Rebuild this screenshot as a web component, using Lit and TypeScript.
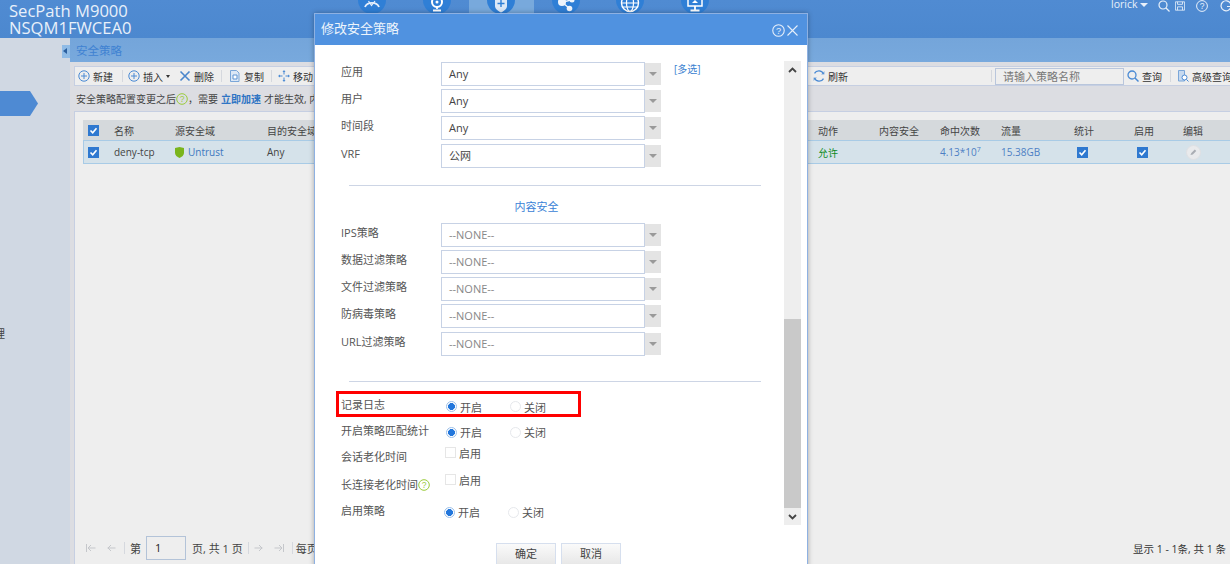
import { LitElement, html, css, svg } from "lit";
import { customElement } from "lit/decorators.js";

const plus = html`<svg class="ti" viewBox="0 0 12 12"><circle cx="6" cy="6" r="5.200" fill="none" stroke="#4a8ad4" stroke-width="1"/><path d="M6 3v6M3 6h6" stroke="#4a8ad4" stroke-width="1"/></svg>`;
const cross = html`<svg class="ti" viewBox="0 0 12 12"><path d="M1.500 1.500l9 9M10.500 1.500l-9 9" stroke="#4a86cc" stroke-width="1.600"/></svg>`;
const copy = html`<svg class="ti" viewBox="0 0 12 12"><path d="M1.500 .5h6l2.500 2.500v8.500h-8.500z" fill="#dbe7f5" stroke="#7aa6d8"/><path d="M4 5h4v4h-4z" fill="#fff" stroke="#5c93d2"/></svg>`;
const move = html`<svg class="ti" viewBox="0 0 12 12"><path d="M6 0l1.500 2h-3zM6 12l1.500-2h-3zM0 6l2-1.500v3zM12 6l-2-1.500v3z" fill="#4a8ad4"/><path d="M6 2v2.500M6 7.500v2.500M2 6h2.500M7.500 6h2.500" stroke="#4a8ad4"/></svg>`;
const refresh = html`<svg class="ti" viewBox="0 0 12 12"><path d="M10.500 4a5 5 0 0 0-9-.6" fill="none" stroke="#4a8ad4" stroke-width="1.300"/><path d="M1.500 8a5 5 0 0 0 9 .6" fill="none" stroke="#4a8ad4" stroke-width="1.300"/><path d="M11.500 1v3.500h-3.500zM.5 11v-3.500h3.500z" fill="#4a8ad4" opacity=".6"/></svg>`;
const search = html`<svg class="ti" viewBox="0 0 12 12"><circle cx="5" cy="5" r="4" fill="none" stroke="#4a8ad4" stroke-width="1.300"/><path d="M8 8l3.500 3.500" stroke="#4a8ad4" stroke-width="1.500"/></svg>`;
const adv = html`<svg class="ti" viewBox="0 0 12 12"><path d="M1.500 .5h6v10.500h-6z" fill="#c6d9ef" stroke="#7aa6d8"/><circle cx="7.500" cy="7.500" r="2.500" fill="#fff" stroke="#4a8ad4"/><path d="M9.500 9.500l2 2" stroke="#4a8ad4"/></svg>`;
const help = (c: string) => html`<svg class="help" viewBox="0 0 12 12"><circle cx="6" cy="6" r="5.300" fill="none" stroke="${c}"/><text x="6" y="9" text-anchor="middle" font-size="8.500" font-family="Liberation Sans" fill="${c}">?</text></svg>`;
const checkMark = html`<svg class="cb" viewBox="0 0 11 11"><rect width="11" height="11" fill="#2f79d0"/><path d="M2.500 5.500l2.200 2.300 3.800-4.600" fill="none" stroke="#fff" stroke-width="1.600"/></svg>`;

const tabIcons = [
  svg`<path d="M7 7c2-5.500 12-5.500 14 0" fill="none" stroke="#e6effa" stroke-width="1.800"/><path d="M10.500 1l3 4.500 3.500-4.500" fill="none" stroke="#e6effa" stroke-width="1.200"/>`,
  svg`<circle cx="14" cy="2" r="5" fill="none" stroke="#fff" stroke-width="2"/><circle cx="14" cy="2" r="1.500" fill="#fff"/><path d="M14 7v2M10 10.500h8" stroke="#fff" stroke-width="1.800"/>`,
  svg`<path d="M8 -1h12v7c0 3-3 5-6 6.500c-3-1.500-6-3.500-6-6.500z" fill="#dbe8f7"/><path d="M14 0v7M10.500 3.500h7" stroke="#2f7fd6" stroke-width="1.400"/>`,
  svg`<circle cx="10" cy="2" r="4" fill="#eef4fb"/><circle cx="17.500" cy="8.500" r="2.800" fill="#eef4fb"/><circle cx="20" cy="0" r="2.500" fill="#eef4fb"/><path d="M11 3l6 5M11 2l8-2" stroke="#eef4fb" stroke-width="1.300"/>`,
  svg`<circle cx="14" cy="3" r="8.500" fill="none" stroke="#fff" stroke-width="1.400"/><ellipse cx="14" cy="3" rx="3.500" ry="8.500" fill="none" stroke="#fff" stroke-width="1.200"/><path d="M6 3h16M7 7h14" stroke="#fff" stroke-width="1.200"/>`,
  svg`<path d="M7 -1h14v7h-14z" fill="none" stroke="#fff" stroke-width="1.500"/><path d="M11 3l3 -3 3 3z" fill="#fff"/><path d="M14 6v4M9.500 10.500h9" stroke="#fff" stroke-width="1.800"/>`,
];

@customElement("app-root")
export class AppRoot extends LitElement {
  static styles = css`
    :host { display: block; width: 1230px; height: 564px; overflow: hidden; position: relative; background: #eee;
      font-family: "Open Sans", "Noto Sans CJK SC", sans-serif; font-size: 11px; color: #444; }
    * { box-sizing: border-box; }
    .header { height: 38px; display: flex; background: linear-gradient(#508bd2, #4c88cf); color: #e8f0fa; }
    .logo { width: 341px; padding: 2px 0 0 9px; font-size: 16.600px; line-height: 17px; font-family: "Open Sans", sans-serif; }
    .tabs { display: flex; width: 392px; margin-left: -1px; }
    .tab { width: 64.500px; display: flex; justify-content: center; align-items: flex-start; }
    .tab.on { background: #78a9dc; }
    .tab svg { width: 28px; height: 14px; display: block; }
    .user { margin-left: auto; display: flex; align-items: flex-start; padding-top: 0; margin-right: -2px; height: 12px; }
    .user span { font-size: 10.500px; line-height: 9px; width: 29px; }
    .caret { width: 0; height: 0; border: 4px solid transparent; border-top: 4px solid #e8f0fa; border-bottom: 0; margin: 3px 10px 0 0; }
    .user svg { display: block; }
    .uicon { width: 12px; height: 12px; margin-right: 5px; }
    .body { display: flex; height: 526px; }
    .side { width: 70px; background: #d0d8e3; position: relative; flex: none; display: flex; flex-direction: column; }
    .toggle { position: absolute; top: 7px; right: 0; width: 8px; height: 13px; background: #8fbbe6; }
    .toggle::after { content: ""; position: absolute; left: 1px; top: 3px; border: 3px solid transparent; border-right: 4px solid #2a5f9f; border-left: 0; }
    .active { margin-top: 53px; width: 38px; height: 25px; background: #4e8ad3; clip-path: polygon(0 0, 30px 0, 38px 50%, 30px 100%, 0 100%); flex: none; }
    .li { margin-top: 209px; font-size: 11px; color: #444; margin-left: -6px; }
    .main { flex: 1; background: #dcdde2; display: flex; flex-direction: column; min-width: 0; }
    .crumb { height: 24px; background: linear-gradient(#74a5da, #78a9dd); color: #3f82d2; font-size: 11.500px; line-height: 25px; padding-left: 6px; flex: none; }
    .toolbar { margin: 4px 0 0 4px; height: 20px; background: #eee; border-top: 1px solid #c6cfe2; border-bottom: 1px solid #c6cfe2; border-left: 1px solid #c6cfe2; display: flex; align-items: center; padding-left: 3px; flex: none; color: #333; white-space: nowrap; font-size: 10px; }
    .ti { width: 12px; height: 12px; display: block; flex: none; margin-right: 3px; }
    .sep { width: 1px; height: 12px; background: #d5d8de; flex: none; }
    .dn { width: 0; height: 0; border: 2.500px solid transparent; border-top: 3px solid #333; border-bottom: 0; margin: 1px 0 0 3px; }
    .tb { display: flex; align-items: center; flex: none; }
    .search { width: 129px; height: 17px; border: 1px solid #b9c6dc; padding-left: 7px; line-height: 15px; color: #777; font-size: 11px; background: #eee; flex: none; margin: 0 3px 0 3px; }
    .notice { height: 25px; line-height: 24px; padding-left: 6px; flex: none; color: #444; white-space: nowrap; display: flex; align-items: center; font-size: 10px; }
    .notice b { color: #2f75c4; font-weight: 600; margin: 0 3px; }
    .help { width: 12px; height: 12px; flex: none; display: block; }
    .panel { flex: 1; margin-left: 4px; background: #eee; border-top: 1px solid #c6cfe2; border-left: 1px solid #c6cfe2; padding: 8px 0 0 8px; display: flex; flex-direction: column; min-height: 0; }
    .row { display: grid; grid-template-columns: 26px 61px 92px 551px 61px 61px 61px 73px 60px 49px 1fr; align-items: center; flex: none; font-size: 10px; }
    .th { height: 20px; background: #d5d9dc; color: #444; padding-left: 5px; }
    .tr { height: 24px; background: #d5e2ea; border-top: 1px solid #a8cbe6; border-bottom: 1px solid #a8cbe6; border-left: 1px solid #a8cbe6; padding-left: 4px; }
    .cb { width: 11px; height: 11px; display: block; }
    .blue { color: #4d7fc4; }
    .zone { display: flex; align-items: center; gap: 4px; color: #3d78c0; }
    .green { color: #0f8a1d; }
    sup { font-size: 7px; line-height: 0; }
    .edit { width: 15px; height: 15px; border-radius: 50%; background: #e9eaec; border: 1px solid #dfe0e3; display: block; margin-left: 3px; }
    .ctr { display: block; margin-left: 3px; }
    .pager { margin-top: auto; height: 24px; margin-bottom: 4px; display: flex; align-items: center; margin-left: 3px; white-space: nowrap; color: #444; }
    .pg { width: 10px; height: 10px; flex: none; display: block; }
    .pinput { width: 40px; height: 24px; border: 1px solid #b3c3d8; padding-left: 8px; line-height: 22px; color: #222; margin: 0 6px 0 5px; flex: none; }
    .pright { margin-left: auto; margin-right: 4px; color: #333; font-size: 10.500px; }

    .modal { position: absolute; left: 314px; top: 13px; width: 494px; height: 570px; background: #fff; border: 1px solid #8eb1e2; box-shadow: 0 0 5px rgba(0,0,0,.3); display: flex; flex-direction: column; }
    .mhead { height: 31px; background: #5092e0; color: #eef5fc; font-size: 13px; line-height: 28px; padding: 0 9px 0 6px; display: flex; align-items: flex-start; flex: none; }
    .mhead .icons { margin-left: auto; display: flex; align-items: center; gap: 2px; margin-top: 10px; }
    .mhead .help { width: 13px; height: 13px; }
    .x { width: 11px; height: 11px; display: block; }
    .mbody { display: flex; height: 491px; flex: none; }
    .form { width: 469px; padding: 17px 0 0 26px; flex: none; }
    .fr { display: flex; height: 24px; margin-bottom: 3px; }
    .fr.x4 { margin-bottom: 4px; }
    .fl { width: 100px; line-height: 20px; height: 20px; color: #555; flex: none; white-space: nowrap; }
    .select { width: 204px; height: 24px; border: 1px solid #c7d2e5; padding-left: 7px; line-height: 21px; color: #444; flex: none; }
    .none { color: #888; }
    .arrow { width: 16px; height: 22px; margin-top: 1px; background: #e4e4e4; position: relative; flex: none; }
    .arrow::after { content: ""; position: absolute; left: 4px; top: 9px; border: 4px solid transparent; border-top: 4px solid #9a9a9a; border-bottom: 0; }
    .multi { color: #3a7fd0; margin-left: 13px; line-height: 14px; font-size: 10px; }
    .div { height: 1px; background: #cdd5e5; margin-left: 8px; width: 412px; }
    .d1 { margin-top: 17px; }
    .d2 { margin-top: 25px; }
    .sect { height: 20px; line-height: 20px; text-align: center; color: #3a82d6; width: 391px; margin: 11px 0 6px 0; padding-left: 0; }
    .opt { display: grid; grid-template-columns: 105px 64px 60px; height: 20px; align-items: center; }
    .opt .ol { color: #555; line-height: 20px; white-space: nowrap; display: flex; align-items: center; }
    .opt .ol.lo { padding-top: 1px; }
    .hl { border: 3px solid #f00; width: 245px; height: 26px; margin: 9px 0 0 -5px; padding-left: 2px; grid-template-columns: 105px 64px 60px; }
    .choice { display: flex; align-items: center; color: #555; gap: 3px; white-space: nowrap; }
    .radio { width: 11px; height: 11px; border-radius: 50%; border: 1px solid #e6e8ec; background: #fff; flex: none; }
    .radio.on { border-color: #9cc0ea; background: radial-gradient(circle, #2377dc 0 3.200px, #fff 3.700px); }
    .box { width: 11px; height: 11px; border: 1px solid #e6e6e6; flex: none; margin-left: -1px; background: #fff; }
    .mt4 { margin-top: 4px; } .mt5 { margin-top: 5px; } .mt8 { margin-top: 8px; } .mt7 { margin-top: 7px; }
    .pt4 { padding-top: 4px; } .pt2 { padding-top: 2px; } .up3 { margin-top: -8px; } .up4 { margin-top: -10px; } .pt1 { padding-top: 2px; margin-left: -2px; }
    .scroll { width: 17px; height: 464px; margin-top: 16px; background: #eee; display: flex; flex-direction: column; flex: none; }
    .sb { height: 17px; display: flex; align-items: center; justify-content: center; flex: none; }
    .sb svg { width: 9px; height: 6px; display: block; }
    .thumb { height: 189px; background: #c9c9c9; margin-top: auto; flex: none; }
    .mfoot { display: flex; justify-content: center; gap: 5px; padding-top: 7px; padding-right: 5px; }
    .btn { width: 60px; height: 24px; border: 1px solid #d6dfee; background: linear-gradient(#fafafa, #e6e6e6); text-align: center; line-height: 20px; color: #444; }
  `;

  private tbItem(icon: unknown, label: string, gap = 0) {
    return html`<div class="tb" style="margin-left:${gap}px">${icon}<span>${label}</span></div>`;
  }

  private field(label: string, value: string, none = false, tall = false, multi = false) {
    return html`<div class="fr ${tall ? "x4" : ""}"><div class="fl">${label}</div>
      <div class="select ${none ? "none" : ""}">${value}</div><div class="arrow"></div>
      ${multi ? html`<div class="multi">[多选]</div>` : ""}</div>`;
  }

  private choices(cls: string) {
    return html`<div class="choice ${cls}"><span class="radio on"></span>开启</div>
      <div class="choice ${cls}"><span class="radio"></span>关闭</div>`;
  }

  render() {
    return html`
      <div class="header">
        <div class="logo">SecPath M9000<br />NSQM1FWCEA0</div>
        <div class="tabs">
          ${tabIcons.map((ic, i) => html`<div class="tab ${i === 2 ? "on" : ""}"><svg viewBox="0 0 28 14"><circle cx="14" cy="0" r="14" fill="#2f7fd6"/>${ic}</svg></div>`)}
        </div>
        <div class="user">
          <span>lorick</span><div class="caret"></div>
          <svg class="uicon" viewBox="0 0 12 12"><circle cx="5" cy="5" r="4" fill="none" stroke="#e8f0fa" stroke-width="1.200"/><path d="M8 8l3.500 3.500" stroke="#e8f0fa" stroke-width="1.300"/></svg>
          <svg class="uicon" viewBox="0 0 12 12" style="width:10px;margin-right:11px"><path d="M.5 1h11v10h-11z" fill="none" stroke="#e8f0fa"/><path d="M3 1v3h6v-3M3 11v-4h6v4" fill="none" stroke="#e8f0fa"/></svg>
          <svg class="uicon" viewBox="0 0 12 12" style="margin-right:12px"><circle cx="6" cy="6" r="5.400" fill="none" stroke="#e8f0fa"/><text x="6" y="9" text-anchor="middle" font-size="8.500" font-family="Liberation Sans" fill="#e8f0fa">?</text></svg>
          <svg class="uicon" viewBox="0 0 12 12" style="margin-right:0"><path d="M10.500 3.500a5 5 0 1 0 .5 3h-4" fill="none" stroke="#e8f0fa" stroke-width="1.200"/></svg>
        </div>
      </div>
      <div class="body">
        <div class="side"><div class="toggle"></div><div class="active"></div><div class="li">理</div></div>
        <div class="main">
          <div class="crumb">安全策略</div>
          <div class="toolbar">
            ${this.tbItem(plus, "新建")}
            <div class="sep" style="margin-left:9px"></div>
            ${this.tbItem(plus, "插入", 5)}<div class="dn"></div>
            ${this.tbItem(cross, "删除", 9)}
            <div class="sep" style="margin-left:7px"></div>
            ${this.tbItem(copy, "复制", 7)}
            <div class="sep" style="margin-left:7px"></div>
            ${this.tbItem(move, "移动", 6)}
            ${this.tbItem(refresh, "刷新", 500)}
            <div class="sep" style="margin-left:143px"></div>
            <div class="search">请输入策略名称</div>
            ${this.tbItem(search, "查询")}
            <div class="sep" style="margin-left:8px"></div>
            ${this.tbItem(adv, "高级查询", 6)}
          </div>
          <div class="notice">安全策略配置变更之后${help("#9bcb3c")}，需要<b>立即加速</b>才能生效, 内容安全策略</div>
          <div class="panel">
            <div class="row th">
              ${checkMark}<span>名称</span><span>源安全域</span><span>目的安全域</span><span>动作</span><span>内容安全</span><span>命中次数</span><span>流量</span><span>统计</span><span>启用</span><span>编辑</span>
            </div>
            <div class="row tr">
              ${checkMark}<span>deny-tcp</span>
              <span class="zone"><svg width="9" height="11" viewBox="0 0 9 11"><path d="M0 1l4.500-1 4.500 1v5c0 2-2 4-4.500 5c-2.500-1-4.500-3-4.500-5z" fill="#7ab51d"/></svg>Untrust</span>
              <span>Any</span><span class="green">允许</span><span></span>
              <span class="blue">4.13*10<sup>7</sup></span><span class="blue">15.38GB</span>
              <span class="ctr">${checkMark}</span><span class="ctr">${checkMark}</span>
              <svg class="edit" viewBox="0 0 15 15"><path d="M4 10.500l1-2.500 4-4 1.700 1.700-4 4z" fill="#a9adb3"/></svg>
            </div>
            <div class="pager">
              <svg class="pg" viewBox="0 0 10 10"><path d="M.5 1v8M9.500 5h-7M5 2l-3 3 3 3" fill="none" stroke="#c5c7cb"/></svg>
              <svg class="pg" style="margin-left:10px" viewBox="0 0 10 10"><path d="M9.500 5h-8M5 2l-3 3 3 3" fill="none" stroke="#c5c7cb"/></svg>
              <div class="sep" style="margin:0 5px 0 8px"></div>第<div class="pinput">1</div>页, 共 1 页
              <div class="sep" style="margin:0 5px"></div>
              <svg class="pg" viewBox="0 0 10 10"><path d="M.5 5h8M5 2l3 3-3 3" fill="none" stroke="#c5c7cb"/></svg>
              <svg class="pg" style="margin-left:10px" viewBox="0 0 10 10"><path d="M9.500 1v8M.5 5h7M5 2l3 3-3 3" fill="none" stroke="#c5c7cb"/></svg>
              <div class="sep" style="margin:0 3px 0 8px"></div>每页显示
              <div class="pright">显示 1 - 1条, 共 1 条</div>
            </div>
          </div>
        </div>
      </div>

      <div class="modal">
        <div class="mhead">修改安全策略
          <div class="icons">${help("#e6effa")}
            <svg class="x" viewBox="0 0 11 11"><path d="M.5.5l10 10M10.500.5l-10 10" stroke="#e6effa" stroke-width="1.100"/></svg>
          </div>
        </div>
        <div class="mbody">
          <div class="form">
            ${this.field("应用", "Any", false, false, true)}
            ${this.field("用户", "Any")}
            ${this.field("时间段", "Any", false, true)}
            ${this.field("VRF", "公网")}
            <div class="div d1"></div>
            <div class="sect">内容安全</div>
            ${this.field("IPS策略", "--NONE--", true)}
            ${this.field("数据过滤策略", "--NONE--", true)}
            ${this.field("文件过滤策略", "--NONE--", true)}
            ${this.field("防病毒策略", "--NONE--", true, true)}
            ${this.field("URL过滤策略", "--NONE--", true)}
            <div class="div d2"></div>
            <div class="opt hl"><div class="ol lo">记录日志</div>${this.choices("pt4")}</div>
            <div class="opt mt4"><div class="ol">开启策略匹配统计</div>${this.choices("pt2")}</div>
            <div class="opt mt5"><div class="ol lo">会话老化时间</div><div class="choice up3"><span class="box"></span>启用</div></div>
            <div class="opt mt8"><div class="ol lo">长连接老化时间${help("#9bcb3c")}</div><div class="choice up4"><span class="box"></span>启用</div></div>
            <div class="opt mt7"><div class="ol">启用策略</div>${this.choices("pt1")}</div>
          </div>
          <div class="scroll">
            <div class="sb"><svg viewBox="0 0 9 6"><path d="M1 5l3.500-3.500 3.500 3.500" fill="none" stroke="#444" stroke-width="1.800"/></svg></div>
            <div class="thumb"></div>
            <div class="sb"><svg viewBox="0 0 9 6"><path d="M1 1l3.500 3.500 3.500-3.500" fill="none" stroke="#444" stroke-width="1.800"/></svg></div>
          </div>
        </div>
        <div class="mfoot"><div class="btn">确定</div><div class="btn">取消</div></div>
      </div>
    `;
  }
}
